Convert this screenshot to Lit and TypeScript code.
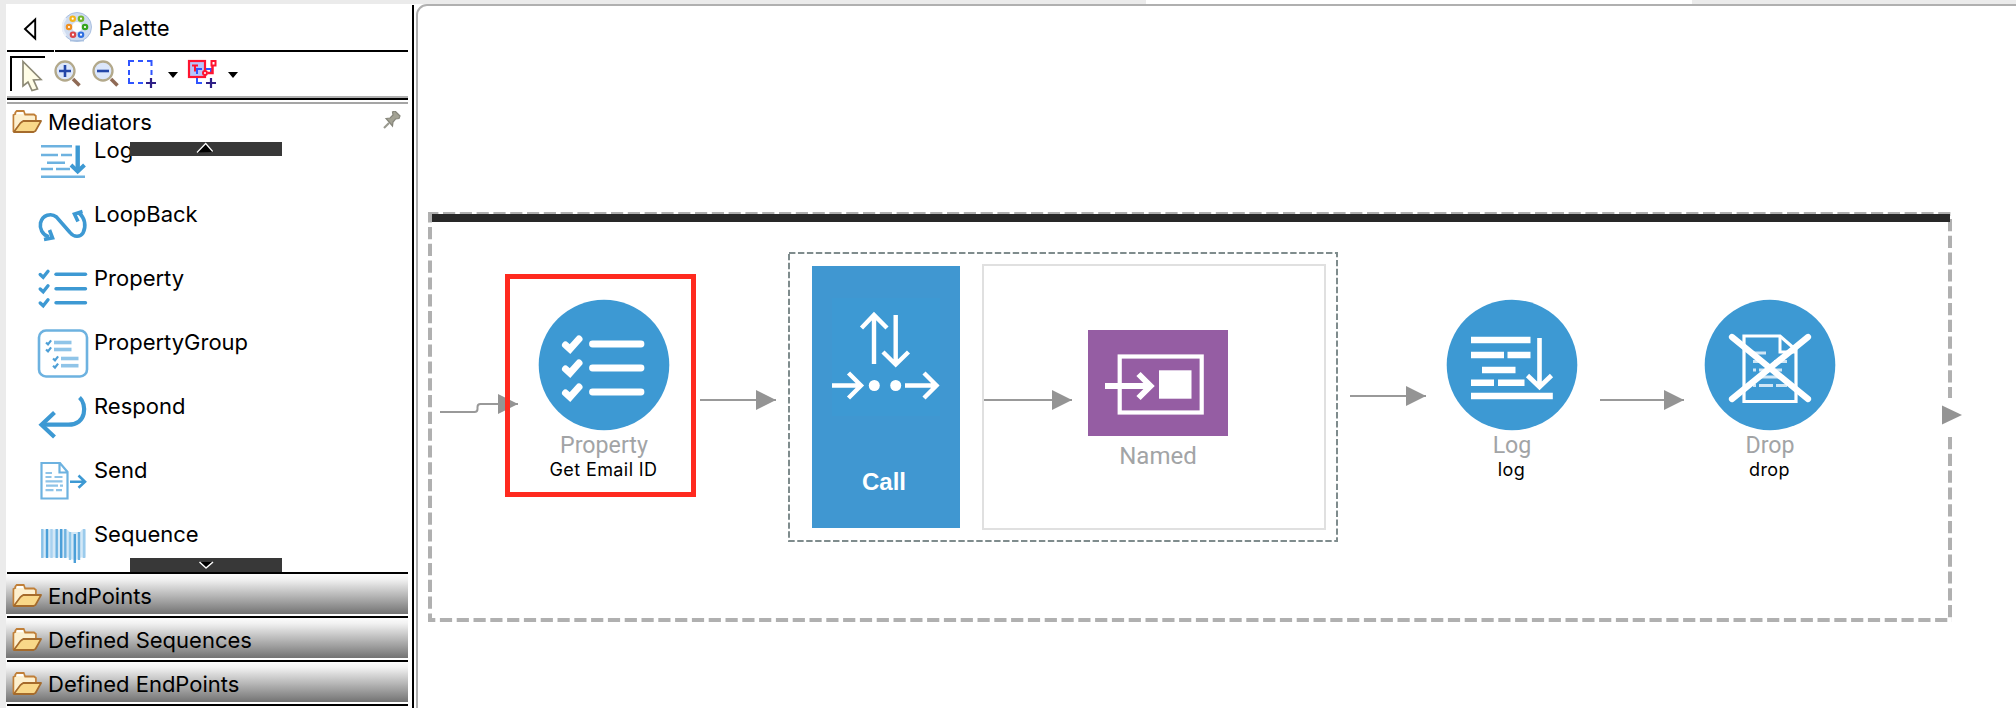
import { LitElement, html, svg, css, type TemplateResult, type SVGTemplateResult } from "lit";
import { customElement, property } from "lit/decorators.js";

/* ---------- palette glyphs (each row is a 54 x 64 cell) ---------- */

const tick = (x: number, y: number, w: number) =>
  svg`<path d="M${x - 1.9 * w} ${y} l${1.5 * w} ${1.4 * w} l${2.4 * w} ${-3 * w}" stroke-width=${1.7 * w} fill="none"/>`;

const logIcon = svg`
  <g stroke="#6db2e0" stroke-width="2.4">
    <path d="M5 28.2h31M5 37h17M25 37h11M11 44.7h18M5 51h12M20 51h14M5 58.7h44"/>
  </g>
  <path d="M41.7 27.5v25" stroke="#3d99d3" stroke-width="4.4"/>
  <path d="M35 47l6.7 6.5 6.8-6.5" fill="none" stroke="#3d99d3" stroke-width="4"/>`;

const loopIcon = svg`
  <g fill="none" stroke="#3d99d3" stroke-width="3.6">
    <path d="M13 55C6 53 3.500 46 4.500 41C6.500 33 15 30.500 20.500 35L34 50.500C38 55.500 44 55.500 47 51C50.500 44 49 36 43 31"/>
    <path d="M46.500 29.500l-8 2.500 3.500 7.500M8 57.500l8.500-1.700L13.500 48"/>
  </g>`;

const propertyIcon = svg`
  <g stroke="#3d99d3" stroke-linecap="round">
    ${[28.5, 43, 57].map((y) => svg`${tick(8, y, 2)}<path d="M20 ${y - 0.2}h29.500" stroke-width="3.400"/>`)}
  </g>`;

const groupIcon = svg`
  <rect x="3" y="20.500" width="48" height="46" rx="7" fill="none" stroke="#6db2e0" stroke-width="2.600"/>
  <g stroke="#4d9fd6">
    ${[[12.5, 32.5], [12.5, 39.5], [19.5, 48.5], [19.5, 55.7]].map(
      ([x, y]) => svg`${tick(x, y, 1.3)}<path d="M${x + 5.5} ${y}h17.500" stroke="#8fc4e8" stroke-width="3.600"/>`
    )}
  </g>`;

const respondIcon = svg`
  <g fill="none" stroke="#3d99d3" stroke-width="4.200">
    <path d="M43.500 23.500C51 30 51 51 32 50.700H6"/>
    <path d="M18.500 38.500L5.500 50.700 18.500 63"/>
  </g>`;

const sendIcon = svg`
  <g fill="none" stroke="#6db2e0" stroke-width="2.200">
    <path d="M5.500 25H24l7.500 9v26.500h-26zM23.500 25v9.500h8"/>
    <path d="M9.500 35h6.500M9.500 39h6M18.500 39h8M9.500 43.300h17M10 47.700h12M24 47.700h3M9.500 52.200h8M20 52.200h6" stroke="#8fc4e8"/>
    <path d="M34 43.700h14.500M42.500 37.500l6.500 6.200-6.500 6" stroke="#3d99d3" stroke-width="2.600"/>
  </g>`;

const sequenceBars: [number, number, number, string][] = [
  [6.3, 27, 56, "#8ac2e8"], [11, 27, 56, "#4b9fd8"], [15.5, 27, 56, "#a9d2ef"], [20.7, 27, 56, "#6db2e0"],
  [25.2, 27, 56, "#4b9fd8"], [29.3, 27, 56, "#6db2e0"], [34, 30, 58, "#8fc8ea"], [38.8, 32, 61, "#4b9fd8"],
  [43, 30, 58, "#6db2e0"], [48, 27, 56, "#9bcbec"],
];
const sequenceIcon = svg`
  <path d="M5 27.500h26l3 2.500h10l2-2.500h4v28h-5l-6 3-7-3H5z" fill="#d3e8f7"/>
  ${sequenceBars.map(([x, a, b, c]) => svg`<path d="M${x} ${a}V${b}" stroke=${c} stroke-width="2.400"/>`)}`;

const folder = html`<svg class="folder" width="30" height="24" viewBox="0 0 32 24" preserveAspectRatio="none">
  <path d="M1.500 21V5l2-1V2.500L5 1h7.500l1.500 3.500h9.500L25.500 6v6H11L3 21z" fill="#fdf0cf" stroke="#c07f38" stroke-width="1.800"/>
  <path d="M5 3.200h7" stroke="#fff" stroke-width="2"/>
  <path d="M2 22L9 13l3-2h19L25 21l-2 1z" fill="#f9d889" stroke="#a56b2c" stroke-width="1.800" stroke-linejoin="round"/>
</svg>`;

@customElement("palette-panel")
export class PalettePanel extends LitElement {
  static styles = css`
    :host { display: flex; flex-direction: column; width: 402px; height: 704px; padding: 0 4px 0 6px; overflow: hidden;
      box-sizing: content-box; background: linear-gradient(90deg, #ebebeb 6px, #fff 6px); font: 22px/28px Inter, sans-serif; color: #000; }
    svg { display: block; flex: none; }
    .header { display: flex; align-items: center; height: 46px; gap: 5.5px; }
    .header .title { padding-top: 2px; }
    .rule { height: 2px; flex: none; margin-left: 1px; background: #000; }
    .rule.head { background: linear-gradient(90deg, #000 47px, #fff 47px 48px, #000 48px); }
    .tools { height: 44px; flex: none; }
    .sep { height: 2px; flex: none; margin-left: 1px; background: #b0b0b0; }
    .sep.low { margin-top: 2px; background: #a5a5a5; }
    .drawer { display: flex; align-items: center; height: 36px; flex: none; padding: 0 6px; gap: 6px; }
    .drawer .name { flex: 1; }
    .list { position: relative; height: 432px; flex: none; overflow: hidden; }
    .items { margin-top: -22px; }
    .item { display: flex; height: 64px; }
    .item svg { margin-left: 30px; overflow: visible; }
    .item .name { padding-top: 23px; margin-left: 4px; line-height: 18px; }
    .scroll { position: absolute; left: 124px; width: 152px; height: 14px; background: #383838; }
    .scroll.up { top: 2px; }
    .scroll.down { bottom: 0; }
    .group { flex: none; height: 40px; margin-bottom: 2px; display: flex; align-items: center; gap: 6px; padding: 3px 6px 0;
      box-sizing: border-box; background: linear-gradient(#fcfcfc, #f1f1f1 14%, #737373); }
  `;

  private items: [string, SVGTemplateResult][] = [
    ["Log", logIcon], ["LoopBack", loopIcon], ["Property", propertyIcon], ["PropertyGroup", groupIcon],
    ["Respond", respondIcon], ["Send", sendIcon], ["Sequence", sequenceIcon],
  ];

  private dot(x: number, y: number, c: string) {
    return svg`<circle cx=${x} cy=${y} r="2.200" fill="#fff" stroke=${c} stroke-width="2.200"/>`;
  }

  private lens(cx: number, plus: boolean) {
    return svg`
      <path d="M${cx + 8} 79l6.500 6.500" stroke="#8f6a55" stroke-width="3.600"/>
      <circle cx=${cx} cy="71" r="9.500" fill="#dce7fb" stroke="#b3a98b" stroke-width="2.300"/>
      <path d="M${cx - 6} 71h12${plus ? `M${cx} 65v12` : ""}" stroke="#2346a8" stroke-width="2.600"/>`;
  }

  render(): TemplateResult {
    return html`
      <div class="header">
        <svg width="87" height="46" viewBox="6 4 87 46">
          <path d="M25 29L35.200 19.500V38.500z" fill="none" stroke="#000" stroke-width="1.900"/>
          <circle cx="77" cy="27" r="14.500" fill="#cfdcf0" stroke="#aac0e0"/>
          <path d="M66 36a14 14 0 0 1 0-18" fill="none" stroke="#eaf0fa" stroke-width="2"/>
          <path d="M70 40.700h14" stroke="#a9c0e0" stroke-width="1.500"/>
          <circle cx="77" cy="27" r="5" fill="#fff"/>
          ${this.dot(72.7, 18.7, "#f5b41a")}${this.dot(81, 18.7, "#73b52c")}${this.dot(69, 27, "#f09022")}
          ${this.dot(85, 27, "#35a51f")}${this.dot(73, 34.7, "#dc4648")}${this.dot(81, 34.7, "#2f6fe0")}
        </svg>
        <span class="title">Palette</span>
      </div>
      <div class="rule head"></div>
      <div class="tools">
        <svg width="240" height="44" viewBox="6 52 240 44">
          <path d="M11 91V57H45" fill="none" stroke="#000" stroke-width="2"/>
          <path d="M23 61.500V86l5-4 4 8.500 5.500-1.500-4-9 7.500-.5z" fill="#fffde6" stroke="#8d8a76" stroke-width="1.700"/>
          ${this.lens(65, true)}${this.lens(103, false)}
          <path d="M129 66v-5h5M138 61h5M147 61h4.500v5M129 70v5M151.500 70v5M129 78v5h5M138 83h5" fill="none" stroke="#2f55ff" stroke-width="2"/>
          <path d="M146 83h10M151 78v10" stroke="#2e1f86" stroke-width="2.200"/>
          <path d="M168 72h10l-5 6z"/>
          <rect x="189" y="61" width="16" height="16" fill="#b9c5fa" stroke="#ff1430" stroke-width="2.200"/>
          <path d="M192 65.500h6M195 65.500v6" stroke="#ff1430" stroke-width="2"/>
          <path d="M197 74v-5h5M206 69h5v4M197 78v5h5" fill="none" stroke="#2f55ff" stroke-width="2"/>
          <path d="M208 73h4.500v-7" fill="none" stroke="#ff1430" stroke-width="2.500"/>
          <rect x="211.500" y="61" width="4" height="4.500" fill="#fff" stroke="#ff1430" stroke-width="2"/>
          <circle cx="205" cy="73" r="2" fill="#fff" stroke="#ff1430" stroke-width="2"/>
          <path d="M206 83h10M211 78v10" stroke="#2e1f86" stroke-width="2.200"/>
          <path d="M228 72h10l-5 6z"/>
        </svg>
      </div>
      <div class="sep"></div>
      <div class="rule"></div>
      <div class="sep low"></div>
      <div class="drawer">
        ${folder}<span class="name">Mediators</span>
        <svg width="20" height="22" viewBox="0 1 20 22">
          <path d="M2 18l5-5" stroke="#9a9a90" stroke-width="2.200"/>
          <path d="M4 8.500l4-.5 3-3-.5-3L13 1l5 5-1 2.500-3.500.5-2.500 3-.5 4z" fill="#a3a294" stroke="#85857a" stroke-width="1.200"/>
        </svg>
      </div>
      <div class="list">
        <div class="items">
          ${this.items.map(([name, icon]) => html`<div class="item">
            <svg width="54" height="64" viewBox="0 0 54 64">${icon}</svg><span class="name">${name}</span>
          </div>`)}
        </div>
        <div class="scroll up"><svg width="152" height="14" viewBox="130 142 152 14">
          <path d="M197 152.500l8.500-9 8 8.500z"/><path d="M197 152.500l8.700-9 7 8" fill="none" stroke="#fff" stroke-width="1.200"/></svg></div>
        <div class="scroll down"><svg width="152" height="14" viewBox="130 558 152 14">
          <path d="M199 562h14l-7.500 7z"/><path d="M199.500 562l6.500 6 7-6" fill="none" stroke="#fff" stroke-width="1.500"/></svg></div>
      </div>
      <div class="rule"></div>
      ${["EndPoints", "Defined Sequences", "Defined EndPoints"].map(
        (g) => html`<div class="group">${folder}<span>${g}</span></div><div class="rule"></div>`
      )}
    `;
  }
}

/* ---------- diagram glyphs, drawn around the disc centre ---------- */

const discs: Record<string, SVGTemplateResult> = {
  property: svg`<g stroke="#fff" stroke-linecap="round" fill="none">
    ${[-21, 3, 27].map((y) => svg`<path d="M-38.500 ${y + 1}l4.500 4 9-10" stroke-width="7"/><path d="M-11.500 ${y}H37" stroke-width="6.800"/>`)}</g>`,
  log: svg`<g stroke="#fff" fill="none"><path d="M-41-25H18.500M-41-10H-8M-4.500-10H18.500M-30 5H3.500M-41 17.700H-18M-14 17.700H12.500M-41 31H40.800" stroke-width="6.600"/>
    <path d="M27.500-27V21M15.500 10.500L27.500 22 39.500 10.500" stroke-width="4.600"/></g>`,
  drop: svg`<g stroke="#fff" fill="none"><path d="M-26-29H10L26-15V36.500H-26z" stroke-width="3.200"/><path d="M10-29V-13H26" stroke-width="3"/>
    <path d="M-17-12H-4M-17-3.500H-8M4-3.500H17M-17 5H-14M-11 5H12M-11 12H14M-17 20.500H-14M-11 20.500H3M6 20.500H17" stroke="#cfe6f5" stroke-width="3"/>
    <path d="M-38-28L38 34M38-28L-38 34" stroke-width="6.200" stroke-linecap="round"/></g>`,
};

@customElement("mediator-node")
export class MediatorNode extends LitElement {
  @property() kind = "property";
  @property() label = "";
  @property() caption = "";

  static styles = css`
    :host { display: flex; flex-direction: column; align-items: center; width: 180px; white-space: nowrap; }
    svg { display: block; }
    .label { font: 23.2px/28px Roboto, sans-serif; color: #a2a4a6; height: 26px; }
    .caption { font: 18px/26px Inter, sans-serif; letter-spacing: 0.4px; color: #000; padding-right: 1px; }
  `;

  render() {
    return html`<svg width="132" height="132" viewBox="-66 -66 132 132"><circle r="65.300" fill="#3d99d3"/>${discs[this.kind]}</svg>
      <span class="label">${this.label}</span><span class="caption">${this.caption}</span>`;
  }
}

@customElement("flow-canvas")
export class FlowCanvas extends LitElement {
  static styles = css`
    :host { display: block; position: relative; width: 1602px; height: 704px; overflow: hidden; }
    .sheet { position: absolute; inset: 0; display: block; }
    mediator-node { position: absolute; top: 295px; }
    .edge { position: absolute; left: 2px; top: 0; width: 1640px; height: 800px; box-sizing: border-box; border: 2px solid #b0b0b0; border-radius: 11px 0 0 0; }
    .call { position: absolute; left: 398px; top: 262px; width: 148px; height: 262px; box-sizing: border-box; background: #4097d1; color: #fff;
      padding: 32px 24px 0 20px; font: bold 24px/28px "Liberation Sans", sans-serif; text-align: center; }
    .call svg { display: block; background: #3d99d3; margin-bottom: 52px; }
    .card { position: absolute; left: 568px; top: 260px; width: 344px; height: 266px; box-sizing: border-box; border: 2px solid #e0e0e0;
      padding: 64px 0 0 104px; }
    .named { width: 140px; text-align: center; font: 24px/28px Roboto, sans-serif; color: #a2a4a6; }
    .named svg { display: block; margin-bottom: 6px; }
    .highlight { position: absolute; left: 91px; top: 270px; width: 191px; height: 223px; box-sizing: border-box; border: 5px solid #ff2a1f; }
  `;

  private nodes = [
    { kind: "property", label: "Property", caption: "Get Email ID", x: 604 },
    { kind: "log", label: "Log", caption: "log", x: 1512 },
    { kind: "drop", label: "Drop", caption: "drop", x: 1770 },
  ];

  private links: [number, number, number][] = [[700, 776, 400], [984, 1072, 400], [1350, 1426, 396], [1600, 1684, 400]];

  private head(x: number, y: number, h = 10) {
    return svg`<path d="M${x - 20} ${y - h}L${x} ${y}L${x - 20} ${y + h}z" fill="#949494"/>`;
  }

  render() {
    return html`
      <div class="edge"></div>
      ${this.nodes.map((n) => html`<mediator-node style="left:${n.x - 504}px" kind=${n.kind} label=${n.label} caption=${n.caption}></mediator-node>`)}
      <div class="call">
        <svg width="108" height="118" viewBox="832 298 108 118"><g fill="none" stroke="#fff" stroke-width="4.400">
          <path d="M874 364V316M861.500 328L874 315 887 328M895.700 315V364M883 352L895.700 364.500 908.500 352M832 385.500H861M848.500 373L861 385.500 848.500 398M905 385.500H936M924 373L936.500 385.500 924 398"/></g>
          <circle cx="874.300" cy="385.500" r="5.500" fill="#fff"/><circle cx="895.700" cy="385.500" r="5.500" fill="#fff"/></svg>
        Call
      </div>
      <div class="card"><div class="named">
        <svg width="140" height="106" viewBox="1088 330 140 106"><rect x="1088" y="330" width="140" height="106" fill="#955da3"/>
          <rect x="1119.700" y="356.500" width="82" height="56" fill="none" stroke="#fff" stroke-width="4.200"/>
          <path d="M1105 386H1151M1138.500 374L1150.500 386 1138.500 398" fill="none" stroke="#fff" stroke-width="6"/>
          <rect x="1159" y="370.300" width="32.500" height="28.400" fill="#fff"/></svg>
        Named
      </div></div>
      <svg class="sheet" width="1602" height="704" viewBox="414 4 1602 704">
        <g fill="none" stroke="#b0b0b0" stroke-width="4" stroke-dasharray="12.200 4.600">
          <path d="M428 214H1952" stroke-dashoffset="1.800"/>
          <path d="M430 212V622" stroke-dashoffset="1.800"/>
          <path d="M428 620H1952" stroke-dashoffset="4.900"/>
          <path d="M1950 219V398M1950 437V618"/>
        </g>
        <path d="M432 218H1950" stroke="#282828" stroke-width="8"/>
        <rect x="789" y="253" width="548" height="288" fill="none" stroke="#7f8c8d" stroke-width="2" stroke-dasharray="6.400 2.550"/>
        <g fill="none" stroke="#999" stroke-width="2">
          <path d="M440 412H474.500q3 0 3-3v-2q0-3 3-3H518"/>
          ${this.links.map(([a, b, y]) => svg`<path d="M${a} ${y}H${b}"/>`)}
        </g>
        ${this.head(518, 404)}
        ${this.links.map(([, b, y]) => this.head(b, y))}
        ${this.head(1962, 415, 9.5)}
      </svg>
      <div class="highlight"></div>
    `;
  }
}

@customElement("app-root")
export class AppRoot extends LitElement {
  static styles = css`
    :host { display: grid; grid-template-columns: 412px 2px 1602px; grid-template-rows: 4px 704px; width: 2016px; height: 708px; overflow: hidden; background: #fff; }
    .strip { grid-column: 1 / -1; background: linear-gradient(90deg, #ebebeb 1146px, #fff 1146px 1692px, #ebebeb 1692px); }
    .divider { background: #000; margin-top: 1px; }
  `;
  render() {
    return html`<div class="strip"></div><palette-panel></palette-panel><div class="divider"></div><flow-canvas></flow-canvas>`;
  }
}
